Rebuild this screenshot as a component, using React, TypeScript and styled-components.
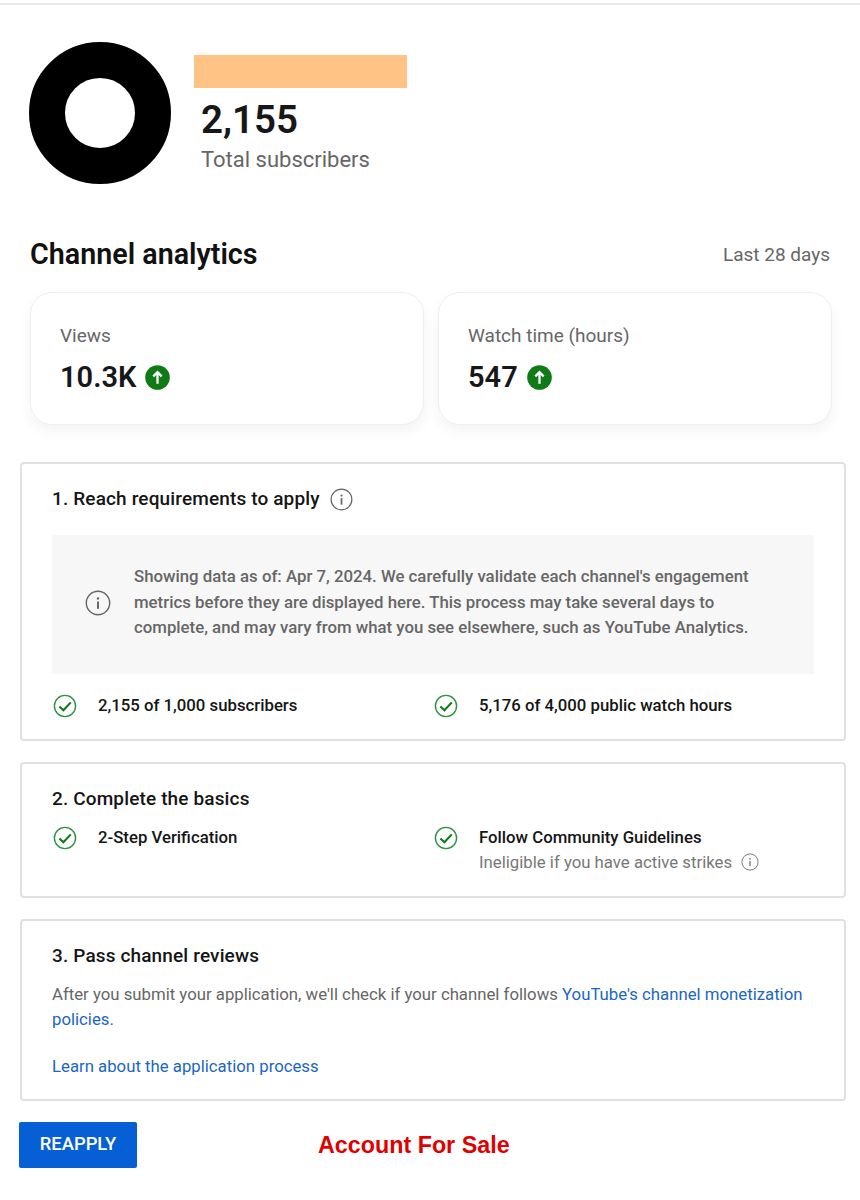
import styled, { createGlobalStyle } from "styled-components";

const Global = createGlobalStyle`
  html, body { margin: 0; padding: 0; background: #fff; }
  body { font-family: Roboto, "Liberation Sans", sans-serif; color: #111; }
`;

const Page = styled.div`
  width: 860px;
  height: 1200px;
  overflow: hidden;
  box-sizing: border-box;
  padding-top: 3px;
`;

const TopLine = styled.div`
  height: 2px;
  background: #e8e8e8;
`;

const Header = styled.header`
  display: flex;
  gap: 23px;
  margin: 37px 0 0 29px;
`;

const Avatar = styled.div`
  width: 142px;
  height: 142px;
  box-sizing: border-box;
  border: 36px solid #000;
  border-radius: 50%;
  background: #fff;
`;

const HeaderText = styled.div`
  padding-top: 13px;
`;

const RedactedName = styled.div`
  width: 213px;
  height: 33px;
  background: #ffc385;
`;

const SubCount = styled.div`
  margin: 9px 0 0 7px;
  font-size: 38.5px;
  line-height: 46px;
  font-weight: 600;
  color: #17171a;
`;

const SubLabel = styled.div`
  margin: 4px 0 0 7px;
  font-size: 22px;
  line-height: 26px;
  color: #666;
`;

const AnalyticsHead = styled.div`
  display: flex;
  justify-content: space-between;
  align-items: center;
  margin: 48px 30px 0 30px;
  height: 44px;
`;

const AnalyticsTitle = styled.h2`
  margin: 0;
  font-size: 28.7px;
  font-weight: 600;
  color: #111;
`;

const Period = styled.span`
  font-size: 19px;
  color: #666;
`;

const Stats = styled.div`
  display: grid;
  grid-template-columns: 394px 394px;
  gap: 14px;
  margin: 16px 0 0 30px;
`;

const StatCard = styled.div`
  height: 133px;
  box-sizing: border-box;
  padding: 31px 29px 0;
  border: 1px solid #efefef;
  border-radius: 22px;
  background: #fff;
  box-shadow: 0 6px 14px rgba(0, 0, 0, 0.05);
`;

const StatLabel = styled.div`
  font-size: 19px;
  line-height: 24px;
  color: #666;
`;

const StatValue = styled.div`
  display: flex;
  align-items: center;
  gap: 9px;
  margin-top: 11px;
  font-size: 29px;
  line-height: 36px;
  font-weight: 600;
  color: #17171a;
`;

const Panels = styled.div`
  display: flex;
  flex-direction: column;
  gap: 21px;
  margin: 37px 14px 0 20px;
`;

const Panel = styled.section<{ $h: number }>`
  height: ${({ $h }) => $h}px;
  box-sizing: border-box;
  padding: 23px 30px 0;
  border: 2px solid #e0e0e0;
  border-radius: 4px;
`;

const PanelTitle = styled.h3`
  display: flex;
  align-items: center;
  gap: 10px;
  margin: 0;
  font-size: 19px;
  line-height: 24px;
  font-weight: 500;
  letter-spacing: 0.14px;
  color: #151515;
`;

const Notice = styled.div`
  display: flex;
  align-items: center;
  gap: 23px;
  height: 139px;
  box-sizing: border-box;
  margin-top: 24px;
  padding: 0 0 4px 33px;
  background: #f7f7f7;
  font-size: 16.8px;
  line-height: 25.5px;
  font-weight: 500;
  color: #666;
`;

const CheckGrid = styled.div<{ $mt: number }>`
  display: grid;
  grid-template-columns: 381px 1fr;
  margin-top: ${({ $mt }) => $mt}px;
`;

const CheckItem = styled.div`
  display: flex;
  gap: 21px;
  padding-left: 1px;
`;

const CheckText = styled.div`
  padding-top: 1px;
  font-size: 16.75px;
  line-height: 26px;
  font-weight: 500;
  color: #151515;
`;

const CheckNote = styled.div`
  display: flex;
  align-items: center;
  gap: 9px;
  margin-top: -1px;
  font-weight: 400;
  color: #777;
`;

const Body = styled.p`
  margin: 14px 0 0;
  font-size: 16.75px;
  line-height: 25px;
  color: #666;
`;

const Link = styled.a`
  color: #1a66c4;
  text-decoration: none;
`;

const LearnMore = styled.div`
  margin-top: 22px;
  font-size: 16.75px;
  line-height: 25.5px;
`;

const Footer = styled.div`
  display: flex;
  align-items: center;
  gap: 181px;
  margin: 21px 0 0 19px;
`;

const Reapply = styled.button`
  width: 118px;
  height: 46px;
  padding: 0 0 4px;
  border: 0;
  border-radius: 2px;
  background: #065fd4;
  color: #fff;
  font-family: Roboto, sans-serif;
  font-size: 18.4px;
  font-weight: 500;
`;

const ForSale = styled.div`
  font-family: "Liberation Sans", Arial, sans-serif;
  font-size: 23.3px;
  font-weight: 700;
  color: #e00000;
`;

const UpArrow = () => (
  <svg width="25" height="25" viewBox="0 0 26 26">
    <circle cx="13" cy="13" r="12.8" fill="#0f7a16" />
    <path d="M13 19.5V7.5M8.6 11.8 13 7.4l4.4 4.4" fill="none" stroke="#fff" strokeWidth="2.4" />
  </svg>
);

const InfoIcon = ({ size, color = "#666" }: { size: number; color?: string }) => (
  <svg width={size} height={size} viewBox="0 0 24 24">
    <circle cx="12" cy="12" r="10.8" fill="none" stroke={color} strokeWidth="1.3" />
    <rect x="11.1" y="10.6" width="1.8" height="6.8" fill={color} />
    <circle cx="12" cy="7.9" r="1.1" fill={color} />
  </svg>
);

const CheckIcon = () => (
  <svg width="24" height="24" viewBox="0 0 24 24" style={{ flexShrink: 0, marginTop: 3 }}>
    <circle cx="12" cy="12" r="10.6" fill="none" stroke="#2d9240" strokeWidth="1.4" />
    <path d="M6.4 12.4 10.4 16.2 17.8 8.4" fill="none" stroke="#0f7a16" strokeWidth="2.1" />
  </svg>
);

export default function App() {
  return (
    <Page>
      <Global />
      <TopLine />

      <Header>
        <Avatar />
        <HeaderText>
          <RedactedName />
          <SubCount>2,155</SubCount>
          <SubLabel>Total subscribers</SubLabel>
        </HeaderText>
      </Header>

      <AnalyticsHead>
        <AnalyticsTitle>Channel analytics</AnalyticsTitle>
        <Period>Last 28 days</Period>
      </AnalyticsHead>

      <Stats>
        <StatCard>
          <StatLabel>Views</StatLabel>
          <StatValue>
            10.3K <UpArrow />
          </StatValue>
        </StatCard>
        <StatCard>
          <StatLabel>Watch time (hours)</StatLabel>
          <StatValue>
            547 <UpArrow />
          </StatValue>
        </StatCard>
      </Stats>

      <Panels>
        <Panel $h={279}>
          <PanelTitle>
            1. Reach requirements to apply <InfoIcon size={23} />
          </PanelTitle>
          <Notice>
            <InfoIcon size={26} />
            <div>
              Showing data as of: Apr 7, 2024. We carefully validate each channel's engagement
              <br />
              metrics before they are displayed here. This process may take several days to
              <br />
              complete, and may vary from what you see elsewhere, such as YouTube Analytics.
            </div>
          </Notice>
          <CheckGrid $mt={17}>
            <CheckItem>
              <CheckIcon />
              <CheckText>2,155 of 1,000 subscribers</CheckText>
            </CheckItem>
            <CheckItem>
              <CheckIcon />
              <CheckText>5,176 of 4,000 public watch hours</CheckText>
            </CheckItem>
          </CheckGrid>
        </Panel>

        <Panel $h={136}>
          <PanelTitle>2. Complete the basics</PanelTitle>
          <CheckGrid $mt={12}>
            <CheckItem>
              <CheckIcon />
              <CheckText>2-Step Verification</CheckText>
            </CheckItem>
            <CheckItem>
              <CheckIcon />
              <CheckText>
                Follow Community Guidelines
                <CheckNote>
                  Ineligible if you have active strikes <InfoIcon size={18} color="#777" />
                </CheckNote>
              </CheckText>
            </CheckItem>
          </CheckGrid>
        </Panel>

        <Panel $h={182}>
          <PanelTitle>3. Pass channel reviews</PanelTitle>
          <Body>
            After you submit your application, we'll check if your channel follows{" "}
            <Link>YouTube's channel monetization policies.</Link>
          </Body>
          <LearnMore>
            <Link>Learn about the application process</Link>
          </LearnMore>
        </Panel>
      </Panels>

      <Footer>
        <Reapply>REAPPLY</Reapply>
        <ForSale>Account For Sale</ForSale>
      </Footer>
    </Page>
  );
}
